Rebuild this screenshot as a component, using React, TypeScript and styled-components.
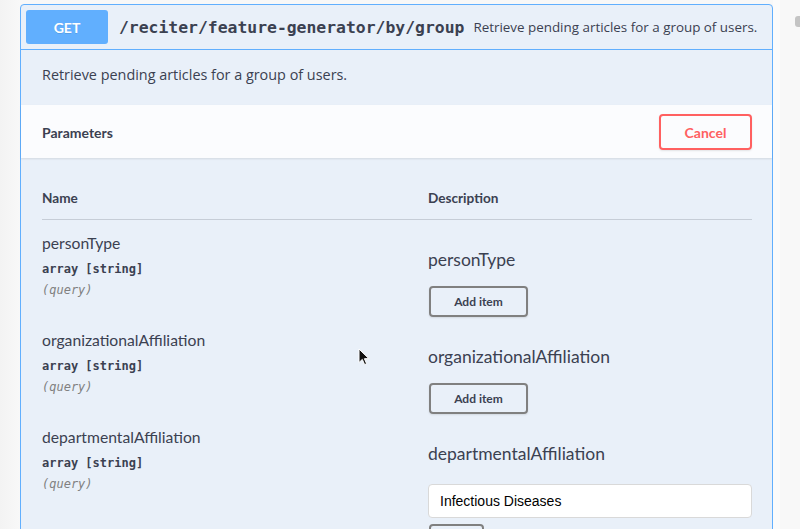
import React from 'react';
import styled, {createGlobalStyle} from 'styled-components';

const GlobalStyle = createGlobalStyle`
    html, body {
        margin: 0;
        padding: 0;
        background: #f7f7f7;
        overflow: hidden;
    }
    body {
        font-family: Lato, "Open Sans", sans-serif;
        color: #3b4151;
    }
    * {
        box-sizing: border-box;
    }
`

type Param = {
    name: string
    type: string
    location: string
    values: string[]
}

const params: Param[] = [
    {name: 'personType', type: 'array [string]', location: '(query)', values: []},
    {name: 'organizationalAffiliation', type: 'array [string]', location: '(query)', values: []},
    {name: 'departmentalAffiliation', type: 'array [string]', location: '(query)', values: ['Infectious Diseases']},
]

const App = () => {
    return (
        <>
            <GlobalStyle/>
            <Page>
                <Opblock>
                    <Summary>
                        <MethodBadge>GET</MethodBadge>
                        <Path>/reciter/feature-generator/by/group</Path>
                        <SummaryDesc>Retrieve pending articles for a group of users.</SummaryDesc>
                    </Summary>
                    <DescriptionWrapper>
                        <p>Retrieve pending articles for a group of users.</p>
                    </DescriptionWrapper>
                    <SectionHeader>
                        <SectionTitle>Parameters</SectionTitle>
                        <CancelButton>Cancel</CancelButton>
                    </SectionHeader>
                    <TableContainer>
                        <HeadRow>
                            <HeadCell>Name</HeadCell>
                            <HeadCell>Description</HeadCell>
                        </HeadRow>
                        {params.map(p => (
                            <ParamRow key={p.name}>
                                <NameCell>
                                    <ParamName>{p.name}</ParamName>
                                    <ParamType>{p.type}</ParamType>
                                    <ParamIn>{p.location}</ParamIn>
                                </NameCell>
                                <DescCell>
                                    <DescTitle>{p.name}</DescTitle>
                                    {p.values.length === 0 ? (
                                        <ItemButton>Add item</ItemButton>
                                    ) : (
                                        p.values.map(v => (
                                            <ItemRow key={v}>
                                                <TextInput defaultValue={v}/>
                                                <RemoveButton aria-label="remove item"/>
                                            </ItemRow>
                                        ))
                                    )}
                                </DescCell>
                            </ParamRow>
                        ))}
                    </TableContainer>
                </Opblock>
                <Gutter>
                    <ScrollThumb/>
                </Gutter>
                <Cursor width="12" height="18" viewBox="0 0 12 18">
                    <path d="M1 1 L1 14.5 L4.3 11.4 L6.6 16.6 L8.6 15.7 L6.4 10.7 L10.8 10.6 Z"
                          fill="#111" stroke="#fff" strokeWidth="1" strokeLinejoin="round"/>
                </Cursor>
            </Page>
        </>
    );
};

export default App;

const Page = styled.div`
    position: relative;
    display: flex;
    height: 529px;
    padding: 4px 0 0 20px;
    background: linear-gradient(90deg, #f3f3f3 0px, #f8f8f8 20px);
`

const Opblock = styled.div`
    width: 753px;
    flex-shrink: 0;
    border: 1px solid #61affe;
    border-radius: 4px;
    background: #e9f0f9;
    height: 620px;
`

const Summary = styled.div`
    display: flex;
    align-items: center;
    padding: 5px;
    border-bottom: 1px solid #61affe;
`

const MethodBadge = styled.div`
    width: 82px;
    height: 34px;
    display: flex;
    align-items: center;
    justify-content: center;
    background: #61affe;
    border-radius: 3px;
    color: #fff;
    font-size: 14px;
    font-weight: 700;
    text-shadow: 0 1px 0 rgba(0, 0, 0, .1);
`

const Path = styled.span`
    margin-left: 11px;
    font-family: "DejaVu Sans Mono", monospace;
    font-size: 16.4px;
    font-weight: 700;
    color: #3b4151;
`

const SummaryDesc = styled.span`
    margin-left: 9px;
    font-family: "Open Sans", sans-serif;
    font-size: 13.4px;
    color: #3b4151;
`

const DescriptionWrapper = styled.div`
    padding: 15px 21px 20px;

    p {
        margin: 0;
        font-family: "Open Sans", sans-serif;
        font-size: 14.4px;
        line-height: 20px;
    }
`

const SectionHeader = styled.div`
    display: flex;
    align-items: center;
    justify-content: space-between;
    padding: 9px 20px 8px 21px;
    background: rgba(255, 255, 255, .8);
    box-shadow: 0 1px 2px rgba(0, 0, 0, .1);
`

const SectionTitle = styled.h4`
    margin: 0;
    font-size: 14px;
    font-weight: 700;
`

const CancelButton = styled.button`
    width: 93px;
    height: 36px;
    border: 2px solid #ff6060;
    border-radius: 4px;
    background: transparent;
    color: #ff6060;
    font-family: inherit;
    font-size: 14px;
    font-weight: 700;
    box-shadow: 0 1px 2px rgba(0, 0, 0, .1);
`

const TableContainer = styled.div`
    padding: 20px 20px 0 21px;
`

const HeadRow = styled.div`
    display: grid;
    grid-template-columns: 386px 1fr;
    border-bottom: 1px solid rgba(59, 65, 81, .2);
`

const HeadCell = styled.div`
    padding: 12px 0;
    font-size: 13.6px;
    font-weight: 700;
    line-height: 17px;
`

const ParamRow = styled.div`
    display: grid;
    grid-template-columns: 386px 1fr;
    padding-top: 11px;
`

const NameCell = styled.div`
    display: flex;
    flex-direction: column;
`

const ParamName = styled.div`
    font-size: 15.7px;
    line-height: 24px;
`

const ParamType = styled.div`
    margin-top: 6px;
    font-family: "DejaVu Sans Mono", monospace;
    font-size: 12px;
    font-weight: 700;
    line-height: 16px;
`

const ParamIn = styled.div`
    margin-top: 5px;
    font-family: "DejaVu Sans Mono", monospace;
    font-size: 12px;
    font-style: italic;
    line-height: 16px;
    color: #808080;
`

const DescCell = styled.div`
    display: flex;
    flex-direction: column;
    align-items: flex-start;
    padding-top: 17px;
`

const DescTitle = styled.div`
    font-size: 17.5px;
    line-height: 24px;
    margin-bottom: 14px;
`

const ItemButton = styled.button`
    width: 99px;
    height: 31px;
    margin-left: 1px;
    border: 2px solid #808080;
    border-radius: 4px;
    background: transparent;
    color: #3b4151;
    font-family: inherit;
    font-size: 12px;
    font-weight: 700;
    box-shadow: 0 1px 2px rgba(0, 0, 0, .1);
`

const ItemRow = styled.div`
    width: 100%;
    margin-top: 4px;
`

const TextInput = styled.input`
    display: block;
    width: 100%;
    height: 34px;
    padding: 0 11px;
    border: 1px solid #d9d9d9;
    border-radius: 4px;
    background: #fff;
    font-family: "Liberation Sans", Arial, sans-serif;
    font-size: 14px;
    color: #000;
    outline: none;
`

const RemoveButton = styled.button`
    display: block;
    width: 55px;
    height: 30px;
    margin: 6px 0 0 1px;
    border: 2px solid #808080;
    border-radius: 4px;
    background: transparent;
`

const Gutter = styled.div`
    flex: 1;
    display: flex;
    justify-content: flex-end;
    align-items: flex-start;
    margin-top: -4px;
    border-left: 7px solid #fbfbfb;
`

const ScrollThumb = styled.div`
    width: 5px;
    height: 11px;
    margin-top: 16px;
    border-radius: 3px 0 0 3px;
    background: #c4c4c4;
`

const Cursor = styled.svg`
    position: absolute;
    left: 358px;
    top: 348px;
`
